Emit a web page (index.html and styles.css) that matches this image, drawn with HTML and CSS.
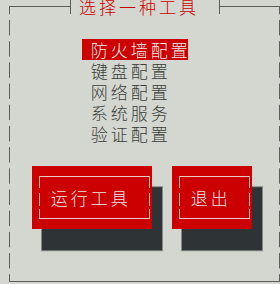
FILE: index.html
```html
<!DOCTYPE html>
<html lang="zh-CN">
<head>
<meta charset="utf-8">
<title>选择一种工具</title>
<link rel="stylesheet" href="styles.css">
</head>
<body>
<div class="screen">
  <div class="frame">
    <div class="titlebar">
      <div class="seg seg-left"></div>
      <div class="tick"></div>
      <div class="title">选择一种工具</div>
      <div class="tick"></div>
      <div class="seg seg-right"></div>
    </div>
    <div class="body">
      <ul class="menu">
        <li class="item selected">防火墙配置</li>
        <li class="item">键盘配置</li>
        <li class="item">网络配置</li>
        <li class="item">系统服务</li>
        <li class="item">验证配置</li>
      </ul>
      <div class="buttons">
        <div class="btn btn-run"><div class="btn-frame">运行工具</div></div>
        <div class="btn btn-quit"><div class="btn-frame">退出</div></div>
      </div>
    </div>
    <div class="bottom"></div>
  </div>
</div>
</body>
</html>
```

FILE: styles.css
```css
html, body {
  margin: 0;
  padding: 0;
  background: #d3d7cf;
}

body {
  width: 280px;
  height: 284px;
  overflow: hidden;
  font-family: "Noto Sans CJK SC", "Noto Sans", sans-serif;
  font-size: 17px;
  font-weight: 300;
  letter-spacing: 3px;
}

.screen {
  width: 280px;
  height: 284px;
}

.frame {
  margin-left: 9px;
  width: 271px;
}

.titlebar {
  display: flex;
  align-items: flex-start;
  height: 14px;
}

.seg {
  box-sizing: border-box;
  margin-top: 6px;
  height: 8px;
  border-top: 1px solid #5c5e5a;
}

.seg-left {
  width: 61px;
  border-left: 1px solid #5c5e5a;
}

.seg-right {
  flex: 1;
  border-right: 1px solid #5c5e5a;
}

.tick {
  width: 1px;
  height: 14px;
  background: #5c5e5a;
}

.title {
  box-sizing: border-box;
  width: 148px;
  height: 21.2px;
  margin-top: -3.6px;
  padding-left: 8px;
  line-height: 21.2px;
  color: #cc0000;
  white-space: nowrap;
}

.body {
  box-sizing: border-box;
  height: 261px;
  padding: 0 1px;
  overflow: hidden;
  background:
    linear-gradient(to bottom, #5c5e5a 0 15px, transparent 15px) left 0 top 6px / 1px 21.2px repeat-y,
    linear-gradient(to bottom, #5c5e5a 0 15px, transparent 15px) right 0 top 6px / 1px 21.2px repeat-y;
}

.menu {
  list-style: none;
  margin: 24.7px 0 0 71.7px;
  padding: 0;
  width: 106.6px;
}

.item {
  height: 21.2px;
  line-height: 21.2px;
  padding-left: 9px;
  color: #3a3d3b;
  white-space: nowrap;
}

.selected {
  background: #cc0000;
  color: #ecebe8;
}

.buttons {
  display: flex;
  gap: 20px;
  margin: 21.2px 0 0 21.7px;
}

.btn {
  box-sizing: border-box;
  height: 63.6px;
  padding: 10.6px 2px 0 7.6px;
  background: #cc0000;
  box-shadow: 10px 21.2px 0 #2e3436, 10px 21.2px 0 1px #858883;
}

.btn-run {
  width: 120px;
}

.btn-quit {
  width: 80px;
}

.btn-frame {
  box-sizing: border-box;
  height: 42.4px;
  display: flex;
  align-items: center;
  padding-left: 11.4px;
  color: #efe6e4;
  white-space: nowrap;
  border-top: 1px solid #e9c6c4;
  border-bottom: 1px solid #e9c6c4;
  background:
    linear-gradient(to bottom, #e9c6c4 0 10.7px, transparent 10.7px 15.7px, #e9c6c4 15.7px 29px, transparent 29px 32.3px, #e9c6c4 32.3px) left 0 top 0 / 1px 100% no-repeat,
    linear-gradient(to bottom, #e9c6c4 0 10.7px, transparent 10.7px 15.7px, #e9c6c4 15.7px 29px, transparent 29px 32.3px, #e9c6c4 32.3px) right 0 top 0 / 1px 100% no-repeat;
}

.bottom {
  box-sizing: border-box;
  height: 7px;
  border-left: 1px solid #5c5e5a;
  border-right: 1px solid #5c5e5a;
  border-bottom: 1px solid #5c5e5a;
}
```
